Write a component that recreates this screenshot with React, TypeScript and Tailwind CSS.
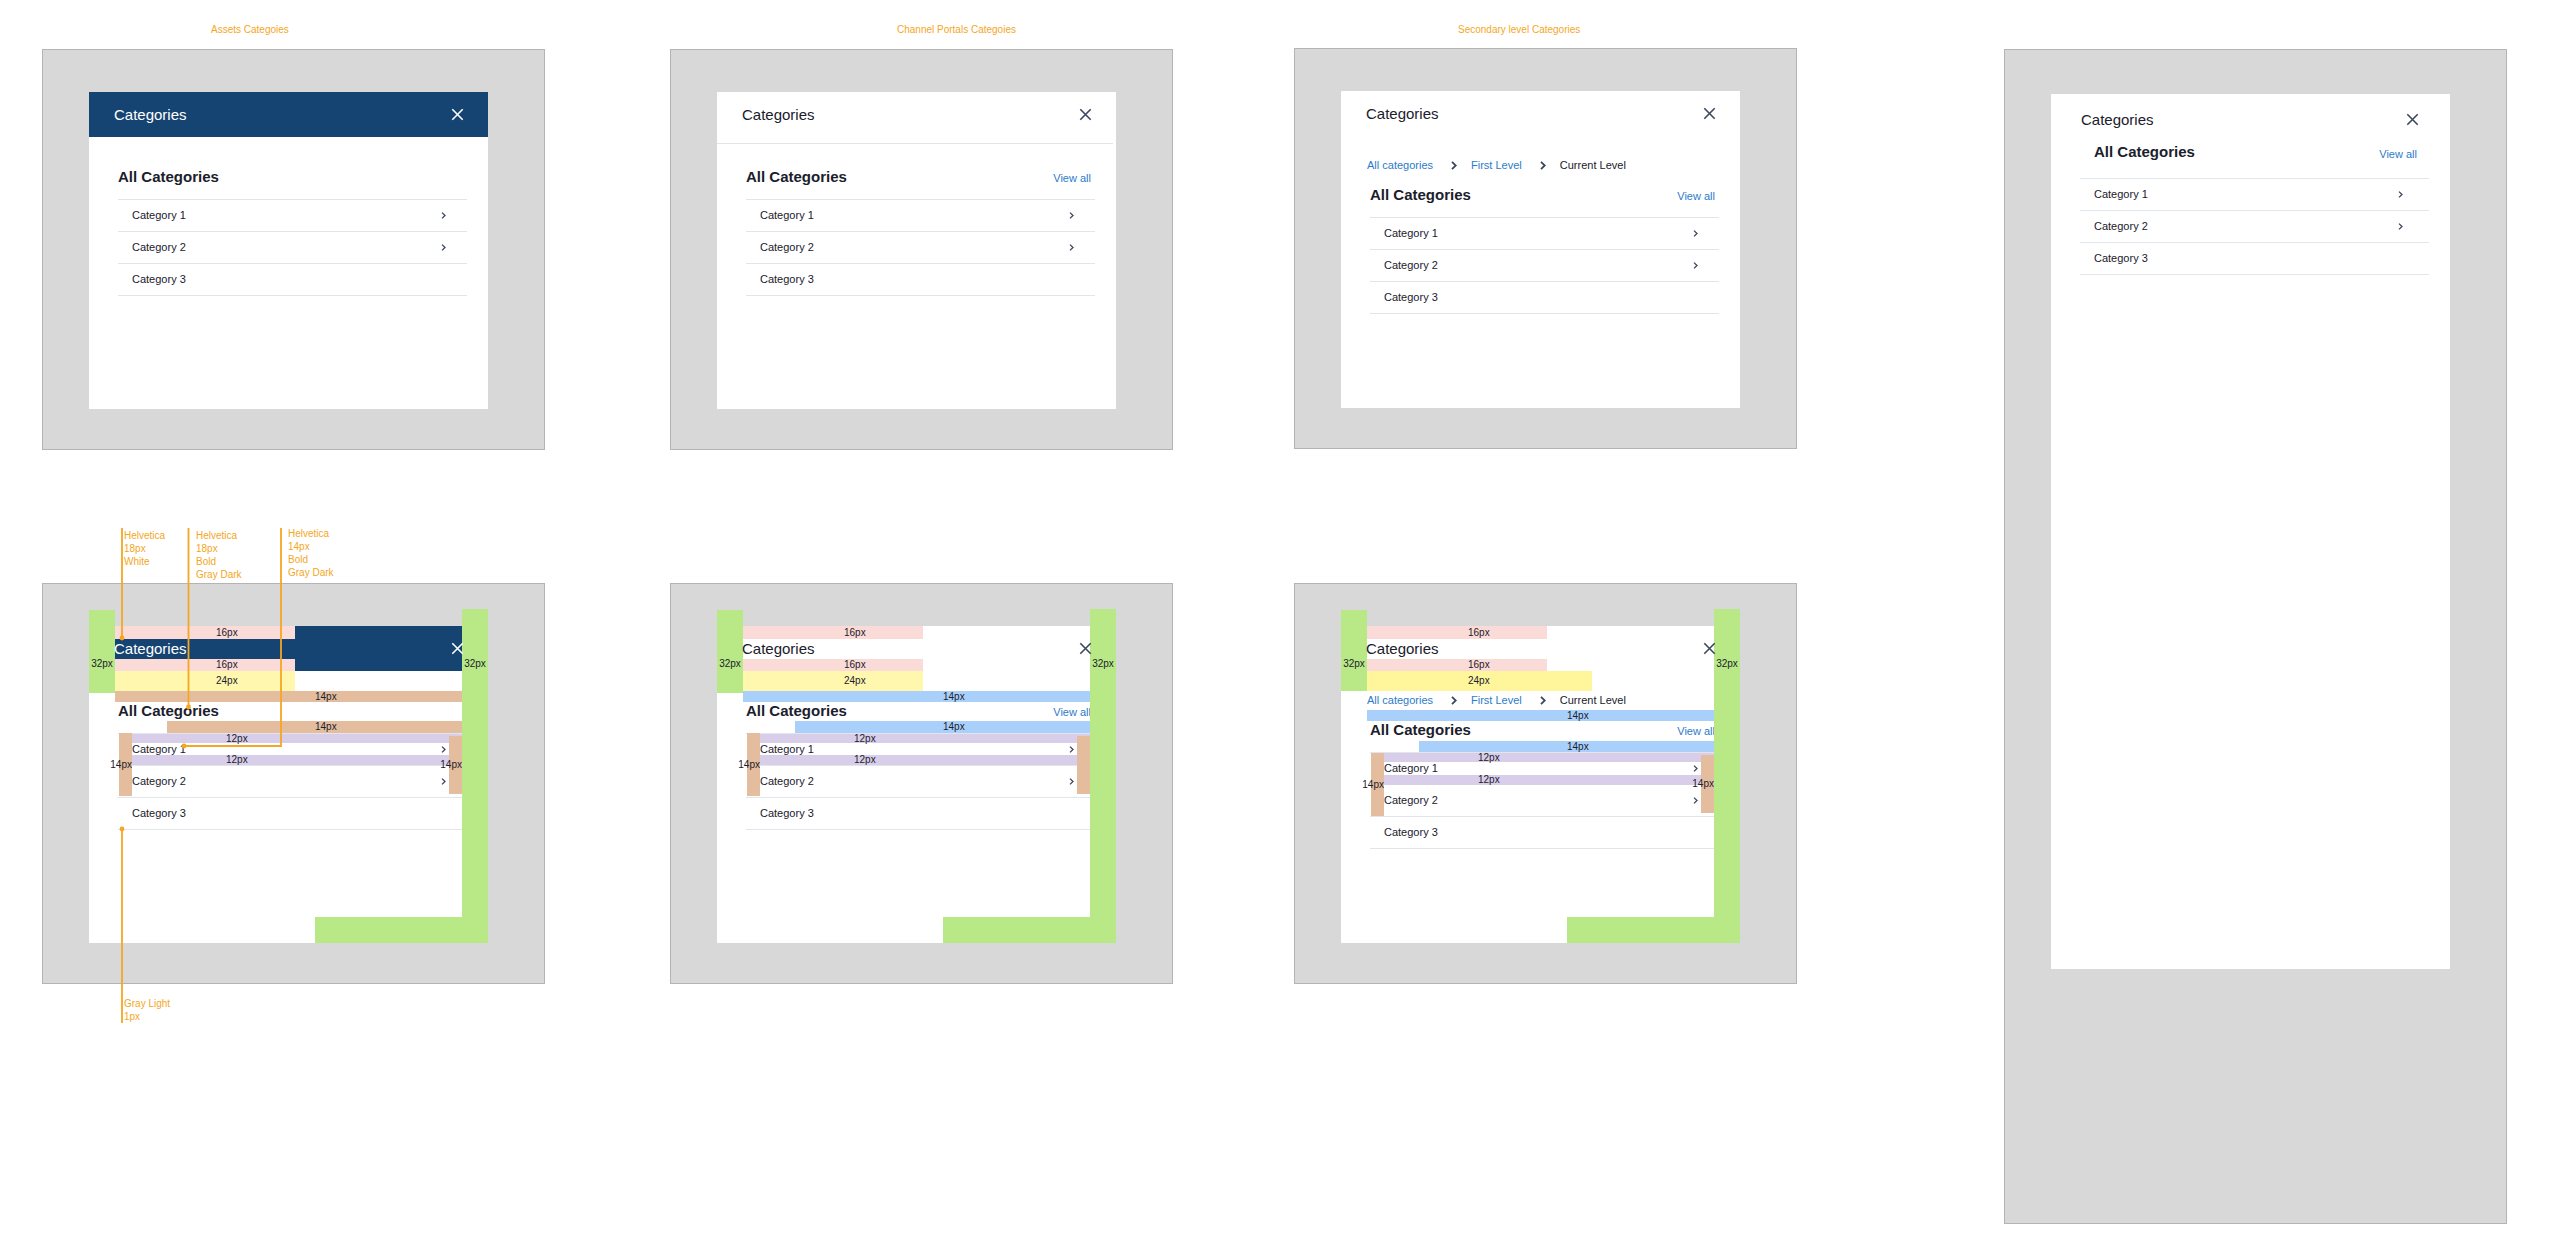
import clsx from "clsx";
import type { ReactNode } from "react";

type Variant = "assets" | "portals" | "secondary";

type Bar = {
  className: string;
  label?: string;
};

const categories = [
  { name: "Category 1", hasChildren: true },
  { name: "Category 2", hasChildren: true },
  { name: "Category 3", hasChildren: false },
];

// Bars that every annotated dialog shares.
const topBars: Bar[] = [
  {
    className: "left-[26px] top-0 h-[13px] w-[180px] items-center bg-[#fbdbd7] pl-[101px]",
    label: "16px",
  },
  {
    className: "left-[26px] top-[33px] h-[12px] w-[180px] items-center bg-[#fbdbd7] pl-[101px]",
    label: "16px",
  },
];

const edgeBars: Bar[] = [
  {
    className: "right-0 top-[-17px] bottom-0 w-[26px] justify-center bg-[#b8e986] pt-[49px]",
    label: "32px",
  },
  { className: "left-[226px] right-0 bottom-0 h-[26px] bg-[#b8e986]" },
];

const assetsBars: Bar[] = [
  ...topBars,
  {
    className: "left-[26px] top-[45px] h-[20px] w-[180px] items-center bg-[#fff7ae] pl-[101px]",
    label: "24px",
  },
  {
    className: "left-[26px] right-[25px] top-[65px] h-[11px] items-center bg-[#e4bd9e] pl-[200px]",
    label: "14px",
  },
  {
    className: "left-[78px] right-[25px] top-[95px] h-[12px] items-center bg-[#e4bd9e] pl-[148px]",
    label: "14px",
  },
  {
    className: "left-[43px] right-[26px] top-[108px] h-[9px] items-center bg-[#d9ceea] pl-[94px]",
    label: "12px",
  },
  {
    className: "left-[43px] right-[26px] top-[129px] h-[10px] items-center bg-[#d9ceea] pl-[94px]",
    label: "12px",
  },
  {
    className: "left-[30px] top-[107px] h-[63px] w-[13px] items-center justify-end bg-[#e4bd9e]",
    label: "14px",
  },
  {
    className: "right-[26px] top-[110px] h-[58px] w-[13px] items-center justify-end bg-[#e4bd9e]",
    label: "14px",
  },
  {
    className: "left-0 top-[-16px] h-[83px] w-[26px] justify-center bg-[#b8e986] pt-[48px]",
    label: "32px",
  },
  ...edgeBars,
];

const portalsBars: Bar[] = [
  ...topBars,
  {
    className: "left-[26px] top-[45px] h-[20px] w-[180px] items-center bg-[#fff7ae] pl-[101px]",
    label: "24px",
  },
  {
    className: "left-[26px] right-[25px] top-[65px] h-[11px] items-center bg-[#a9cffb] pl-[200px]",
    label: "14px",
  },
  {
    className: "left-[78px] right-[25px] top-[95px] h-[12px] items-center bg-[#a9cffb] pl-[148px]",
    label: "14px",
  },
  {
    className: "left-[43px] right-[26px] top-[108px] h-[9px] items-center bg-[#d9ceea] pl-[94px]",
    label: "12px",
  },
  {
    className: "left-[43px] right-[26px] top-[129px] h-[10px] items-center bg-[#d9ceea] pl-[94px]",
    label: "12px",
  },
  {
    className: "left-[30px] top-[107px] h-[63px] w-[13px] items-center justify-end bg-[#e4bd9e]",
    label: "14px",
  },
  { className: "right-[26px] top-[110px] h-[58px] w-[13px] bg-[#e4bd9e]" },
  {
    className: "left-0 top-[-16px] h-[83px] w-[26px] justify-center bg-[#b8e986] pt-[48px]",
    label: "32px",
  },
  ...edgeBars,
];

const secondaryBars: Bar[] = [
  ...topBars,
  {
    className: "left-[26px] top-[45px] h-[20px] w-[225px] items-center bg-[#fff69c] pl-[101px]",
    label: "24px",
  },
  {
    className: "left-[26px] right-[25px] top-[84px] h-[11px] items-center bg-[#a9cffb] pl-[200px]",
    label: "14px",
  },
  {
    className: "left-[78px] right-[25px] top-[115px] h-[11px] items-center bg-[#a9cffb] pl-[148px]",
    label: "14px",
  },
  {
    className: "left-[43px] right-[26px] top-[127px] h-[9px] items-center bg-[#d9ceea] pl-[94px]",
    label: "12px",
  },
  {
    className: "left-[43px] right-[26px] top-[149px] h-[10px] items-center bg-[#d9ceea] pl-[94px]",
    label: "12px",
  },
  {
    className: "left-[30px] top-[127px] h-[63px] w-[13px] items-center justify-end bg-[#e4bd9e]",
    label: "14px",
  },
  {
    className: "right-[26px] top-[129px] h-[58px] w-[13px] items-center justify-end bg-[#e4bd9e]",
    label: "14px",
  },
  {
    className: "left-0 top-[-16px] h-[81px] w-[26px] justify-center bg-[#b8e986] pt-[48px]",
    label: "32px",
  },
  ...edgeBars,
];

function CloseButton() {
  return (
    <button type="button" aria-label="Close" className="block">
      <svg
        viewBox="0 0 11 11"
        className="block h-[11px] w-[11px] overflow-visible"
        fill="none"
        stroke="currentColor"
        strokeWidth="1.6"
      >
        <path d="M0.3 0.3 10.7 10.7M10.7 0.3 0.3 10.7" />
      </svg>
    </button>
  );
}

function Chevron() {
  return (
    <svg
      viewBox="0 0 5 7"
      className="h-[7px] w-[5px] text-[#3b475b]"
      fill="none"
      stroke="currentColor"
      strokeWidth="1.3"
    >
      <path d="M1 0.6 4 3.5 1 6.4" />
    </svg>
  );
}

function BreadcrumbArrow() {
  return (
    <svg
      viewBox="0 0 6 9"
      className="mr-[14px] ml-[18px] h-[9px] w-[6px] text-[#3b475b]"
      fill="none"
      stroke="currentColor"
      strokeWidth="1.8"
    >
      <path d="M1 0.8 4.8 4.5 1 8.2" />
    </svg>
  );
}

function ViewAll() {
  return (
    <a href="#" className="text-[11px] leading-4 text-[#2b7bcb]">
      View all
    </a>
  );
}

function Breadcrumb() {
  return (
    <nav
      aria-label="Breadcrumb"
      className="mt-[21px] flex items-center pl-[26px] text-[11px] leading-4 whitespace-nowrap"
    >
      <a href="#" className="text-[#2b7bcb]">
        All categories
      </a>
      <BreadcrumbArrow />
      <a href="#" className="text-[#2b7bcb]">
        First Level
      </a>
      <BreadcrumbArrow />
      <span>Current Level</span>
    </nav>
  );
}

function CategoryList({ className }: { className: string }) {
  return (
    <ul className={clsx("border-t border-[#e2e5ec]", className)}>
      {categories.map((category) => (
        <li
          key={category.name}
          className="flex h-8 items-center justify-between border-b border-[#e2e5ec] pb-px text-[11px] leading-4"
        >
          {category.name}
          {category.hasChildren && <Chevron />}
        </li>
      ))}
    </ul>
  );
}

function CategoriesDialog({
  variant,
  ruled = false,
  bars = [],
}: {
  variant: Variant;
  ruled?: boolean;
  bars?: Bar[];
}) {
  return (
    <section className="relative mr-[56px] ml-[46px] h-[317px] bg-white">
      <header
        className={clsx(
          "flex h-[45px] items-center justify-between pr-[25px] pl-[25px]",
          variant === "assets" ? "bg-[#154472]" : "bg-white",
        )}
      >
        {/* The annotation bars sit between the header fill and its text. */}
        <h3
          className={clsx(
            "relative z-10 text-[15px] leading-5",
            variant === "assets" && "text-white",
          )}
        >
          Categories
        </h3>
        <span
          className={clsx(
            "relative z-10",
            variant === "assets" ? "text-white" : "text-[#3b475b]",
          )}
        >
          <CloseButton />
        </span>
      </header>
      {ruled && <hr className="mt-[6px] mr-[3px] border-[#e2e5ec]" />}
      {variant === "secondary" && <Breadcrumb />}
      <div
        className={clsx(
          "mr-[21px] mb-3 ml-[29px] flex items-baseline justify-between pr-1",
          variant === "secondary" ? "mt-3" : ruled ? "mt-[23px]" : "mt-[30px]",
        )}
      >
        <h4 className="text-[15px] leading-5 font-bold">All Categories</h4>
        {variant !== "assets" && <ViewAll />}
      </div>
      <CategoryList className="mr-[21px] ml-[29px] [&>li]:pr-[21px] [&>li]:pl-[14px]" />
      {bars.map((bar, index) => (
        <div
          key={index}
          className={clsx(
            "absolute flex text-[10px] leading-3 whitespace-nowrap",
            bar.className,
          )}
        >
          {bar.label}
        </div>
      ))}
    </section>
  );
}

function Board({ children }: { children: ReactNode }) {
  return (
    <div className="relative h-[401px] border border-[#b4b4b4] bg-[#d8d8d8] pt-[42px]">
      {children}
    </div>
  );
}

function Note({ className, lines }: { className: string; lines: string[] }) {
  return (
    <p
      className={clsx(
        "absolute text-[10px] leading-[13px] whitespace-pre text-[#f5a623]",
        className,
      )}
    >
      {lines.join("\n")}
    </p>
  );
}

function Callouts() {
  return (
    <>
      <svg
        className="absolute top-0 left-0 z-20 h-px w-px overflow-visible"
        fill="none"
        stroke="#f5a623"
        strokeWidth="1.8"
      >
        <path d="M79 -56V54M145.5 -56V123M238 -56V162H141M79 245V439" />
        <g fill="#f5a623" stroke="none">
          <circle cx="79" cy="54" r="2.4" />
          <circle cx="145.5" cy="123" r="2.4" />
          <circle cx="141" cy="162" r="2.4" />
          <circle cx="79" cy="245" r="2.4" />
        </g>
      </svg>
      <Note
        className="top-[-55px] left-[81px]"
        lines={["Helvetica", "18px", "White"]}
      />
      <Note
        className="top-[-55px] left-[153px]"
        lines={["Helvetica", "18px", "Bold", "Gray Dark"]}
      />
      <Note
        className="top-[-57px] left-[245px]"
        lines={["Helvetica", "14px", "Bold", "Gray Dark"]}
      />
      <Note className="top-[413px] left-[81px]" lines={["Gray Light", "1px"]} />
    </>
  );
}

function ColumnTitle({ className, children }: { className: string; children: ReactNode }) {
  return (
    <h2
      className={clsx(
        "pt-6 text-[10px] leading-3 whitespace-nowrap text-[#f5a623]",
        className,
      )}
    >
      {children}
    </h2>
  );
}

function TallBoard() {
  return (
    <div className="mt-[49px] h-[1175px] border border-[#b4b4b4] bg-[#d8d8d8] pt-[44px]">
      <section className="mr-[56px] ml-[46px] h-[875px] bg-white pt-4">
        <header className="flex items-start justify-between pr-8 pl-[30px]">
          <h3 className="text-[15px] leading-5">Categories</h3>
          <span className="pt-1 text-[#3b475b]">
            <CloseButton />
          </span>
        </header>
        <div className="mt-3 flex items-end justify-between pr-[33px] pl-[43px]">
          <h4 className="text-[15px] leading-5 font-bold">All Categories</h4>
          <ViewAll />
        </div>
        <CategoryList className="mt-4 mr-[21px] ml-[29px] [&>li]:pr-[26px] [&>li]:pl-[14px]" />
      </section>
    </div>
  );
}

export default function App() {
  return (
    <main className="flex min-h-screen bg-white pr-[57px] pl-[42px] font-['Liberation_Sans',Arial,sans-serif] text-[#1a202c]">
      <div className="min-w-0 flex-1">
        <ColumnTitle className="h-[49px] pl-[169px]">Assets Categoies</ColumnTitle>
        <Board>
          <CategoriesDialog variant="assets" />
        </Board>
        <div className="mt-[133px]">
          <Board>
            <CategoriesDialog variant="assets" bars={assetsBars} />
            <Callouts />
          </Board>
        </div>
      </div>

      <div className="ml-[125px] min-w-0 flex-1">
        <ColumnTitle className="h-[49px] pl-[227px]">Channel Portals Categoies</ColumnTitle>
        <Board>
          <CategoriesDialog variant="portals" ruled />
        </Board>
        <div className="mt-[133px]">
          <Board>
            <CategoriesDialog variant="portals" bars={portalsBars} />
          </Board>
        </div>
      </div>

      <div className="ml-[121px] min-w-0 flex-1">
        <ColumnTitle className="h-[48px] pl-[164px]">Secondary level Categories</ColumnTitle>
        <Board>
          <CategoriesDialog variant="secondary" />
        </Board>
        <div className="mt-[134px]">
          <Board>
            <CategoriesDialog variant="secondary" bars={secondaryBars} />
          </Board>
        </div>
      </div>

      <div className="ml-[207px] min-w-0 flex-1">
        <TallBoard />
      </div>
    </main>
  );
}
